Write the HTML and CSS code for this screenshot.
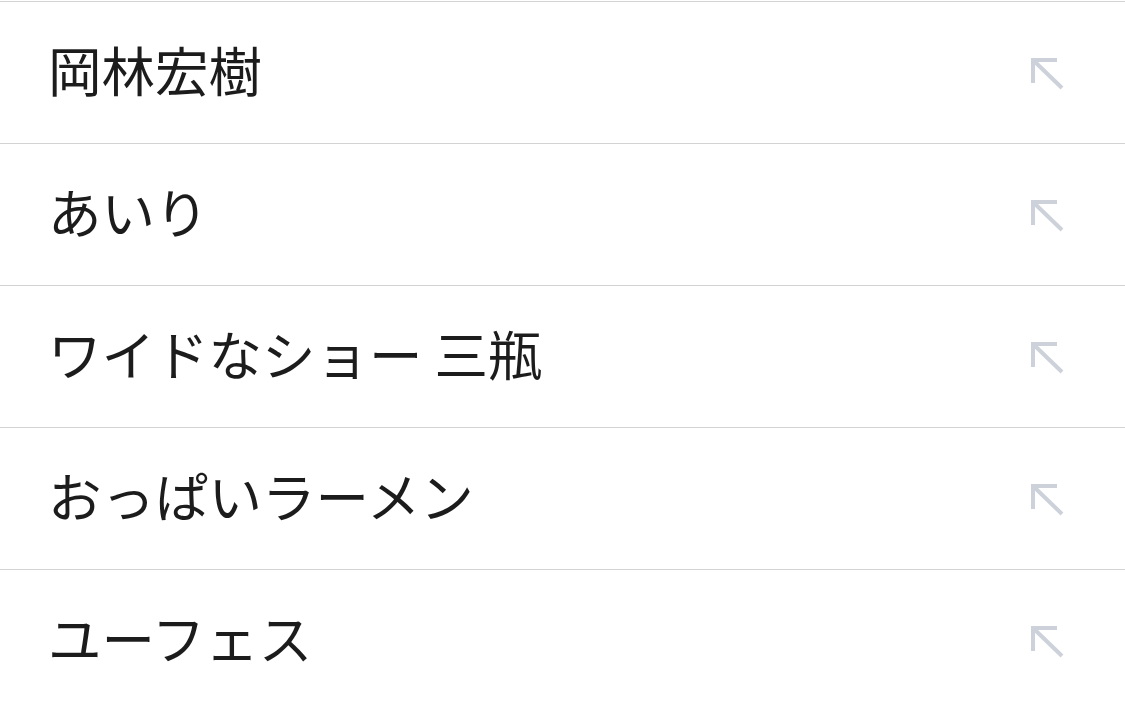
FILE: index.html
```html
<!DOCTYPE html>
<html lang="ja">

<head>
    <meta charset="UTF-8">
    <meta name="viewport" content="width=device-width, initial-scale=1.0">
    <link rel="stylesheet" href="styles.css">
    <title>Suggestions</title>
</head>

<body>
    <ul class="suggestions">
        <li class="suggestion">
            <span class="suggestion-text">岡林宏樹</span>
            <svg class="fill-icon" viewBox="0 0 40 40"><path d="M5 30 V7 H29 M5 7 L34 35"/></svg>
        </li>
        <li class="suggestion">
            <span class="suggestion-text">あいり</span>
            <svg class="fill-icon" viewBox="0 0 40 40"><path d="M5 30 V7 H29 M5 7 L34 35"/></svg>
        </li>
        <li class="suggestion">
            <span class="suggestion-text">ワイドなショー 三瓶</span>
            <svg class="fill-icon" viewBox="0 0 40 40"><path d="M5 30 V7 H29 M5 7 L34 35"/></svg>
        </li>
        <li class="suggestion">
            <span class="suggestion-text">おっぱいラーメン</span>
            <svg class="fill-icon" viewBox="0 0 40 40"><path d="M5 30 V7 H29 M5 7 L34 35"/></svg>
        </li>
        <li class="suggestion">
            <span class="suggestion-text">ユーフェス</span>
            <svg class="fill-icon" viewBox="0 0 40 40"><path d="M5 30 V7 H29 M5 7 L34 35"/></svg>
        </li>
    </ul>
</body>

</html>
```

FILE: styles.css
```css
body {
  margin: 0;
  background-color: #fff;
  font-family: "Noto Sans CJK JP", "Noto Sans", sans-serif;
  color: #1c1c1c;
}

.suggestions {
  list-style: none;
  margin: 0;
  padding: 1px 0 0;
}

.suggestion {
  display: flex;
  align-items: center;
  justify-content: space-between;
  height: 141px;
  padding: 0 57px 0 48px;
  border-top: 1px solid #d3d3d3;
}

.suggestion-text {
  font-size: 53.5px;
  line-height: 1;
  padding-bottom: 8px;
}

.fill-icon {
  width: 40px;
  height: 40px;
  fill: none;
  stroke: #cdd2da;
  stroke-width: 4;
}
```
